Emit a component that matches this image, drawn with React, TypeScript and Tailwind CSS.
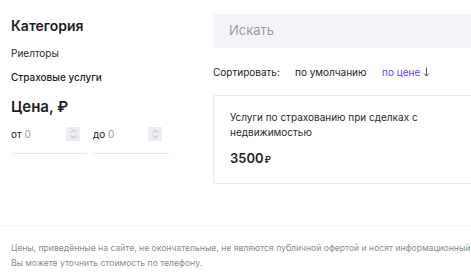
import React from 'react';

function Spinner() {
  return (
    <div className="flex h-[14px] w-[14px] items-center justify-center bg-[#ececf1]">
      <svg width="7" height="10" viewBox="0 0 7 10" fill="none" stroke="#a8a8b3" strokeWidth="0.9">
        <path d="M1 3.5 L3.5 1 L6 3.5" />
        <path d="M1 6.5 L3.5 9 L6 6.5" />
      </svg>
    </div>
  );
}

function PriceInput({ label }: { label: string }) {
  return (
    <div className="flex w-[76px] flex-col">
      <div className="flex h-[20px] items-center justify-between pr-[7px]">
        <span className="text-[10px] text-[#222]">
          {label} <span className="text-[#9a9aa3]">0</span>
        </span>
        <Spinner />
      </div>
      <div className="mt-[9px] h-px bg-[#e6e6ec]" />
    </div>
  );
}

export default function App() {
  return (
    <div
      className="h-[272px] w-[471px] overflow-hidden bg-white text-[#1e1e24]"
      style={{ fontFamily: 'Inter, "Noto Sans", sans-serif' }}
    >
      <div className="flex w-[800px] pl-[11px] pt-[14px]">
        {/* filters */}
        <div className="w-[202px] shrink-0">
          <h2 className="mt-[3px] text-[14px] font-semibold leading-[18px]">Категория</h2>
          <div className="mt-[11px] text-[10px] leading-[14px] text-[#2a2a30]">Риелторы</div>
          <div className="mt-[10px] text-[10px] font-medium leading-[14px]">Страховые услуги</div>
          <h2 className="mt-[13px] text-[15px] font-semibold leading-[20px]">Цена, ₽</h2>
          <div className="mt-[7px] flex gap-[6px]">
            <PriceInput label="от" />
            <PriceInput label="до" />
          </div>
        </div>

        {/* results */}
        <div className="flex-1">
          <div className="flex h-[34px] items-center rounded-[3px] bg-[#f3f4f8] pl-[16px] text-[13px] text-[#9a9ba4]">
            Искать
          </div>
          <div className="mt-[17px] flex items-center text-[10px] leading-[14px]">
            <span className="w-[82px]">Сортировать:</span>
            <span className="w-[87px]">по умолчанию</span>
            <span className="flex items-center gap-[3px] text-[#6a3ff3]">
              по цене
              <svg width="7" height="10" viewBox="0 0 7 10" fill="none" stroke="#55555f" strokeWidth="1">
                <path d="M3.5 0.5 V9" />
                <path d="M1 6.5 L3.5 9 L6 6.5" />
              </svg>
            </span>
          </div>
          <div className="mt-[16px] h-[89px] rounded-[2px] border border-[#e9e9ef] px-[16px] pt-[14px]">
            <p className="w-[200px] text-[10px] leading-[15px] text-[#2a2a30]">
              Услуги по страхованию при сделках с недвижимостью
            </p>
            <div className="mt-[9px] text-[13px] font-semibold leading-[18px]">
              3500<span className="ml-[1px] text-[9px]">₽</span>
            </div>
          </div>
        </div>
      </div>

      <div className="mt-[41px] h-px w-full bg-[#f0f0f3]" />
      <div className="whitespace-nowrap pl-[11px] pt-[15px] text-[8.6px] leading-[15px] text-[#8b8b93]">
        <p>Цены, приведённые на сайте, не окончательные, не являются публичной офертой и носят информационный характер.</p>
        <p>Вы можете уточнить стоимость по телефону.</p>
      </div>
    </div>
  );
}
